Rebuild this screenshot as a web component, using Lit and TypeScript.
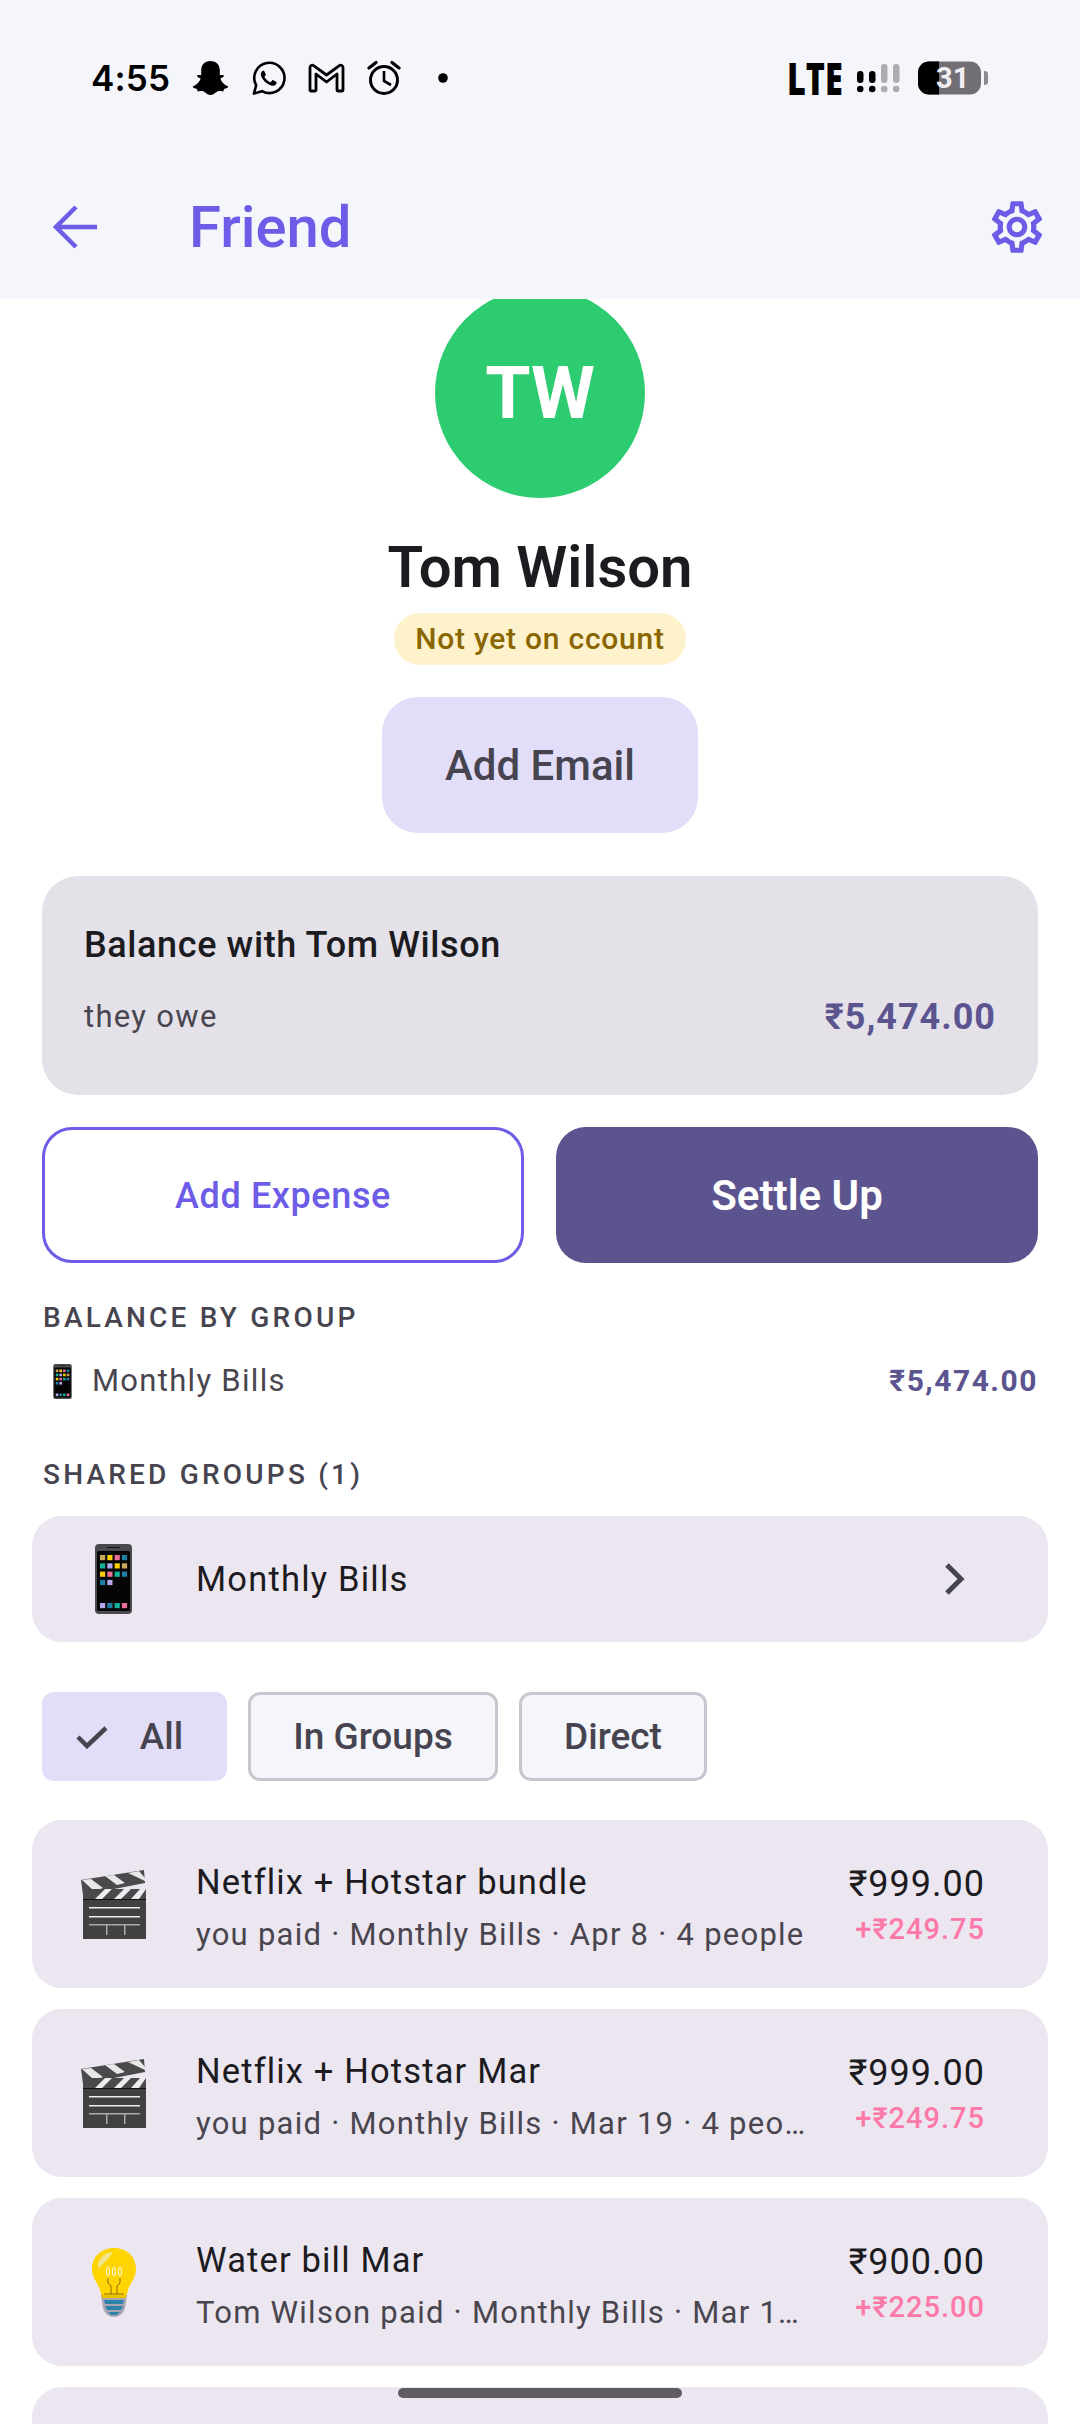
import { LitElement, html, css, svg } from "lit";
import { customElement } from "lit/decorators.js";

const phone = (w: number, h: number) => html`<svg width=${w} height=${h} viewBox="0 0 37 70">
  <rect x="0" y="0" width="37" height="70" rx="4" fill="#4a4a4e"/>
  <rect x="2" y="7" width="33" height="60" rx="1.5" fill="#050505"/>
  <rect x="12" y="3" width="13" height="1" fill="#111"/>
  ${[
    ["#c9a85a","#ffd000","#ee6f9c","#1c7fa3"],
    ["#10b39a","#b6a8ee","#ffd000","#c9a85a"],
    ["#ffd000","#ee6f9c","#10b39a","#1c7fa3"],
    ["#1c7fa3","#b6a8ee"],
  ].map((row, r) => row.map((c, i) => svg`<rect x=${5 + i * 7.3} y=${11 + r * 8.3} width="5.2" height="5.2" fill=${c}/>`))}
  ${["#b6a8ee","#1c7fa3","#10b39a","#ee6f9c"].map((c, i) => svg`<rect x=${5 + i * 7.3} y="59" width="5.2" height="5.2" fill=${c}/>`)}
</svg>`;

const clapper = html`<svg width="65" height="69" viewBox="0 0 65 69">
  <path d="M0 10 63 0 64 13 2 25Z" fill="#4a4a4c"/>
  <path d="M1 10 10 9 22 18 13 21ZM24 6 33 5 44 13 36 15ZM47 3 58 1 64 8 64 11Z" fill="#e9e7ea"/>
  <path d="M2 19H65V29H2Z" fill="#4a4a4c"/>
  <path d="M14 29 24 19H31L21 29ZM33 29 43 19H50L40 29ZM50 29 59 19H65L58 29Z" fill="#eeecef"/>
  <rect x="2" y="29" width="63" height="40" fill="#414143"/>
  <rect x="2" y="29" width="63" height="1" fill="#111"/>
  <rect x="8" y="37" width="51" height="1.5" fill="#eee"/>
  <rect x="8" y="46" width="51" height="1.5" fill="#eee"/>
  <rect x="8" y="54" width="51" height="1.5" fill="#aaa"/>
  <rect x="25" y="55" width="1.5" height="10" fill="#aaa"/>
  <rect x="43" y="55" width="1.5" height="10" fill="#aaa"/>
</svg>`;

const bulb = html`<svg width="44" height="69" viewBox="0 0 44 69">
  <path d="M22 0C9 0 0 9 0 21c0 10 7 14 9 25 0 2 1 3 2 3h22c1 0 2-1 2-3 2-11 9-15 9-25C44 9 35 0 22 0Z" fill="#ffd400"/>
  <path d="M6 20C5 12 11 5 20 4c1 2-5 8-9 12-2 2-3 4-5 4Z" fill="#f1e58c"/>
  <path d="M16 19c-2 0-2 9 0 9s2-9 0-9m6 0c-2 0-2 9 0 9s2-9 0-9m6 0c-2 0-2 9 0 9s2-9 0-9" fill="none" stroke="#fff" stroke-width="1"/>
  <path d="M16 30v5l3 3v8M28 30v5l-3 3v8M12 46H32" fill="none" stroke="#8a6a10" stroke-width="1"/>
  <path d="M9 47H35L33 60C31 66 27 69 22 69S13 66 11 60Z" fill="#a9a6b4"/>
  <path d="M12 52H32L31 56H13ZM13 58H31L29 62H15ZM16 64H28L25 67H19Z" fill="#2f83a8"/>
  <path d="M10 47H34V50H10Z" fill="#e8c400"/>
</svg>`;

type Row = { icon: unknown; title: string; sub: string; amount: string; share: string };
const rows: Row[] = [
  { icon: clapper, title: "Netflix + Hotstar bundle", sub: "you paid · Monthly Bills · Apr 8 · 4 people", amount: "₹999.00", share: "+₹249.75" },
  { icon: clapper, title: "Netflix + Hotstar Mar", sub: "you paid · Monthly Bills · Mar 19 · 4 people", amount: "₹999.00", share: "+₹249.75" },
  { icon: bulb, title: "Water bill Mar", sub: "Tom Wilson paid · Monthly Bills · Mar 19 · 4 people", amount: "₹900.00", share: "+₹225.00" },
];

@customElement("app-root")
export class AppRoot extends LitElement {
  static styles = css`
    :host { display: block; width: 1080px; height: 2424px; position: relative; overflow: hidden; background: #fff; font-family: Roboto, sans-serif; color: #1c1b1f; }
    .top { background: #f5f6fb; height: 299px; display: flex; flex-direction: column; position: relative; z-index: 1; }
    .status { height: 156px; display: flex; align-items: flex-start; box-sizing: border-box; padding: 60px 90px 0 91px; justify-content: space-between; }
    .side { display: flex; align-items: center; height: 36px; }
    .time { font: 600 35px/36px Inter, Roboto, sans-serif; color: #000; margin-right: 22px; letter-spacing: 0.2px; }
    .lte { font: 800 45px/34px "Open Sans", Roboto, sans-serif; color: #000; transform: scaleX(.72); transform-origin: left center; width: 70px; letter-spacing: 0; }
    .batt { position: relative; width: 72px; height: 34px; margin-left: 18px; }
    .batt-num { position: absolute; left: 18px; width: 28px; top: 0; font: 700 29px/34px Roboto, sans-serif; color: #f1eff3; text-align: center; }
    .snap, .wa { margin-right: 21px; }
    .gm { margin-right: 22px; }
    .al { margin-right: 37px; }
    .bar { height: 142px; display: flex; align-items: center; box-sizing: border-box; padding: 0 32px 0 53px; }
    .bar h1 { margin: 0 0 0 91px; font: 500 58px/1 Roboto, sans-serif; color: #6c5ce7; flex: 1; }
    .scroll { height: 2125px; overflow: hidden; }
    .center { display: flex; flex-direction: column; align-items: center; margin-top: -11px; }
    .avatar { width: 210px; height: 210px; border-radius: 50%; background: #2ecc71; color: #fff; display: flex; align-items: center; justify-content: center; font: 700 73px/1 Roboto, sans-serif; }
    .name { font: 600 58px/66px Roboto, sans-serif; margin-top: 36px; color: #1c1b1f; }
    .badge { background: #fdf2cc; color: #8a6500; font: 500 30px/52px Roboto, sans-serif; letter-spacing: .75px; padding: 0 21px; border-radius: 26px; margin-top: 13px; }
    .email { width: 316px; height: 136px; margin-top: 32px; border-radius: 36px; background: #e2defa; color: #46444f; font: 500 42px/138px Roboto, sans-serif; text-align: center; }
    .balance { margin: 43px 42px 0; height: 219px; box-sizing: border-box; padding: 48px 42px 0; background: #e4e1e9; border-radius: 36px; }
    .balance .t { font: 500 36px/42px Roboto, sans-serif; color: #1c1b1f; letter-spacing: .6px; }
    .balance .r { display: flex; justify-content: space-between; align-items: center; margin-top: 31px; }
    .balance .l { font: 400 31px/40px Roboto, sans-serif; color: #49454f; letter-spacing: 1.3px; }
    .balance .v { font: 700 36px/40px Roboto, sans-serif; color: #5b548f; letter-spacing: 1px; }
    .actions { display: grid; grid-template-columns: 1fr 1fr; gap: 32px; margin: 32px 42px 0; }
    .actions div { height: 136px; box-sizing: border-box; border-radius: 30px; display: flex; align-items: center; justify-content: center; padding-top: 2px; }
    .a1 { border: 3px solid #6c5ce7; color: #6c5ce7; font: 500 36px/1 Roboto, sans-serif; letter-spacing: .6px; }
    .a2 { background: #5b548f; color: #fff; font: 600 42px/1 Roboto, sans-serif; }
    .sec { font: 500 28px/36px Roboto, sans-serif; letter-spacing: 3.2px; color: #46444f; margin: 0 43px; }
    .s1 { margin-top: 37px; }
    .s2 { margin-top: 56px; }
    .grow { display: flex; align-items: center; margin: 25px 42px 0 53px; height: 40px; }
    .grow .n { font: 400 31px/40px Roboto, sans-serif; color: #49454f; letter-spacing: 1.3px; margin-left: 20px; flex: 1; }
    .grow .v { font: 700 30px/40px Roboto, sans-serif; color: #5b548f; letter-spacing: 1.5px; }
    .gcard { margin: 23px 32px 0; height: 126px; border-radius: 30px; background: #ebe6f0; display: flex; align-items: center; box-sizing: border-box; padding: 0 81px 0 63px; }
    .gcard .n { font: 400 34.5px/40px Roboto, sans-serif; letter-spacing: 1.2px; margin-left: 64px; flex: 1; }
    .chips { display: flex; gap: 21px; margin: 50px 42px 0; }
    .chip { height: 89px; box-sizing: border-box; border-radius: 12px; display: flex; align-items: center; justify-content: center; font: 500 37px/1 Roboto, sans-serif; color: #46444f; background: #f5f6fb; border: 3px solid #c9c6d0; }
    .chip.on { background: #e2defa; border: 0; width: 185px; gap: 32px; padding-right: 10px; }
    .c2 { width: 250px; }
    .c3 { width: 188px; }
    .list { display: flex; flex-direction: column; gap: 21px; margin: 39px 32px 0; }
    .row { height: 168px; border-radius: 30px; background: #ebe6f0; display: flex; align-items: center; box-sizing: border-box; padding: 0 63px 0 49px; flex: none; }
    .ic { width: 65px; display: flex; justify-content: center; flex: none; }
    .main { flex: 1; min-width: 0; margin-left: 50px; padding-top: 9px; }
    .title { font: 400 34.5px/40px Roboto, sans-serif; letter-spacing: 1.15px; color: #1c1b1f; white-space: nowrap; overflow: hidden; text-overflow: ellipsis; }
    .sub { font: 400 31px/40px Roboto, sans-serif; letter-spacing: 1.25px; color: #49454f; margin-top: 13px; white-space: nowrap; overflow: hidden; text-overflow: ellipsis; }
    .amt { margin-left: 41px; text-align: right; flex: none; padding-top: 5px; }
    .amount { font: 400 36px/40px Roboto, sans-serif; letter-spacing: 1px; color: #1c1b1f; }
    .share { font: 500 29px/40px Roboto, sans-serif; letter-spacing: 1px; color: #fd79a8; margin-top: 5px; }
    .home { position: absolute; left: 398px; top: 2388px; width: 284px; height: 10px; border-radius: 5px; background: #5f5c64; }
  `;

  render() {
    return html`
      <div class="top">
        <div class="status">
          <div class="side">
            <span class="time">4:55</span>
            <svg class="snap" width="37" height="36" viewBox="0 0 37 36"><path d="M18.5 1c6 0 9.300 4 9.300 9.500v4.500c1.500.5 3.500-.5 4 .8.400 1.400-2.600 2.200-3.400 2.800 1 3.500 4.200 6.700 7.500 7.700.8.500.3 1.800-3.800 2.600-.6.800-.3 2.400-1.300 2.500-2-.3-4.300-.8-6.600.8-2 1.500-3.500 2.800-5.700 2.800s-3.700-1.300-5.700-2.800c-2.300-1.600-4.600-1.100-6.600-.8-1 0-.7-1.700-1.300-2.500-4.100-.8-4.600-2.100-3.800-2.600 3.300-1 6.500-4.200 7.500-7.700-.8-.6-3.800-1.400-3.400-2.800.5-1.300 2.500-.3 4-.8v-4.500C9.200 5 12.500 1 18.500 1Z" fill="#000"/></svg>
            <svg class="wa" width="37" height="37" viewBox="0 0 24 24"><path d="M2.500 21.800 4 16.400A9.800 9.800 0 1 1 7.800 20.200Z" fill="none" stroke="#000" stroke-width="1.700" stroke-linejoin="round"/><path d="M8.800 6.900c-.4 0-1 .2-1.300.8-.9 1.400-.5 3 .7 4.700 1.500 2.200 3.700 3.900 6 4.300 1.300.2 2.500-.5 2.900-1.500.2-.5.200-.9.100-1l-2.300-1.200c-.2 0-.4 0-.5.200l-.8 1c-.2.200-.4.200-.6.100-1.500-.6-2.700-1.700-3.500-3.100-.1-.2-.1-.4.100-.6l.6-.8c.1-.2.100-.4 0-.6l-1-2.100c-.1-.2-.2-.2-.4-.2Z" fill="#000"/></svg>
            <svg class="gm" width="37" height="30" viewBox="0 0 37 30"><path d="M2 27V4.500C2 2.500 4 1.500 6 2.800L18.500 12 31 2.800c2-1.300 4-.3 4 1.700V27c0 .6-.4 1-1 1h-4c-.6 0-1-.4-1-1V11L18.500 19 8 11V27c0 .6-.4 1-1 1H3c-.6 0-1-.4-1-1Z" fill="none" stroke="#000" stroke-width="2.800" stroke-linejoin="round"/></svg>
            <svg class="al" width="34" height="36" viewBox="0 0 34 36"><circle cx="17" cy="20" r="13.500" fill="none" stroke="#000" stroke-width="3"/><path d="M17 11v10l7 4" fill="none" stroke="#000" stroke-width="2.600"/><path d="M2 8 9 2.500M32 8 25 2.500" stroke="#000" stroke-width="3.200" stroke-linecap="round"/></svg>
            <svg width="10" height="10" viewBox="0 0 10 10"><circle cx="5" cy="5" r="4.800" fill="#000"/></svg>
          </div>
          <div class="side">
            <span class="lte">LTE</span>
            <svg width="43" height="32" viewBox="0 0 43 32"><g fill="#000"><rect x="0" y="9" width="6.500" height="12" rx="3.200"/><rect x="12" y="9" width="6.500" height="12" rx="3.200"/><circle cx="3.200" cy="27" r="3.300"/><circle cx="15.200" cy="27" r="3.300"/></g><g fill="#aeabb3"><rect x="24" y="2" width="6.500" height="19" rx="3.200"/><rect x="36" y="2" width="6.500" height="19" rx="3.200"/><circle cx="27.200" cy="27" r="3.300"/><circle cx="39.200" cy="27" r="3.300"/></g></svg>
            <div class="batt">
              <svg width="72" height="34" viewBox="0 0 72 34"><rect x="0" y="0.500" width="63" height="33" rx="11" fill="#716e75"/><path d="M11 .5H21V33.500H11A11 11 0 0 1 0 22.500V11.500A11 11 0 0 1 11 .5Z" fill="#000"/><path d="M66 10c3 0 4 1 4 3v8c0 2-1 3-4 3Z" fill="#8b888f"/></svg>
              <span class="batt-num">31</span>
            </div>
          </div>
        </div>
        <div class="bar">
          <svg width="45" height="44" viewBox="0 0 45 44"><path d="M44 22H5M23 2 3 22 23 42" fill="none" stroke="#6c5ce7" stroke-width="4.500"/></svg>
          <h1>Friend</h1>
          <svg width="62" height="62" viewBox="0 0 24 24"><path fill="#6c5ce7" d="M19.430 12.980c.04-.32.07-.64.07-.98 0-.34-.03-.66-.07-.98l2.110-1.650c.19-.15.24-.42.12-.64l-2-3.460c-.09-.16-.26-.25-.44-.25-.06 0-.12.01-.17.03l-2.490 1c-.52-.4-1.080-.73-1.690-.98l-.38-2.650C14.460 2.180 14.250 2 14 2h-4c-.25 0-.46.18-.49.42l-.38 2.650c-.61.25-1.170.59-1.690.98l-2.490-1c-.06-.02-.12-.03-.18-.03-.17 0-.34.09-.43.25l-2 3.460c-.13.22-.07.49.12.64l2.110 1.650c-.04.32-.07.65-.07.98 0 .33.03.66.07.98l-2.110 1.650c-.19.15-.24.42-.12.64l2 3.460c.09.16.26.25.44.25.06 0 .12-.01.17-.03l2.490-1c.52.4 1.080.73 1.690.98l.38 2.650c.03.24.24.42.49.42h4c.25 0 .46-.18.49-.42l.38-2.650c.61-.25 1.170-.59 1.690-.98l2.490 1c.06.02.12.03.18.03.17 0 .34-.09.43-.25l2-3.460c.12-.22.07-.49-.12-.64l-2.110-1.650zm-1.980-1.710c.04.31.05.52.05.73 0 .21-.02.43-.05.73l-.14 1.130.89.7 1.080.84-.7 1.210-1.270-.51-1.040-.42-.9.68c-.43.32-.84.56-1.250.73l-1.060.43-.16 1.130-.2 1.350h-1.400l-.19-1.350-.16-1.130-1.060-.43c-.43-.18-.83-.41-1.230-.71l-.91-.7-1.060.43-1.270.51-.7-1.210 1.080-.84.89-.7-.14-1.130c-.03-.31-.05-.54-.05-.74s.02-.43.05-.73l.14-1.130-.89-.7-1.080-.84.7-1.210 1.270.51 1.040.42.9-.68c.43-.32.84-.56 1.250-.73l1.060-.43.16-1.130.2-1.350h1.390l.19 1.350.16 1.130 1.060.43c.43.18.83.41 1.230.71l.91.7 1.060-.43 1.270-.51.7 1.210-1.070.85-.89.7.14 1.130zM12 8c-2.210 0-4 1.790-4 4s1.790 4 4 4 4-1.790 4-4-1.790-4-4-4zm0 6c-1.100 0-2-.9-2-2s.9-2 2-2 2 .9 2 2-.9 2-2 2z"/></svg>
        </div>
      </div>
      <div class="scroll">
        <div class="center">
          <div class="avatar">TW</div>
          <div class="name">Tom Wilson</div>
          <div class="badge">Not yet on ccount</div>
          <div class="email">Add Email</div>
        </div>
        <div class="balance">
          <div class="t">Balance with Tom Wilson</div>
          <div class="r"><span class="l">they owe</span><span class="v">₹5,474.00</span></div>
        </div>
        <div class="actions"><div class="a1">Add Expense</div><div class="a2">Settle Up</div></div>
        <div class="sec s1">BALANCE BY GROUP</div>
        <div class="grow">${phone(19, 35)}<span class="n">Monthly Bills</span><span class="v">₹5,474.00</span></div>
        <div class="sec s2">SHARED GROUPS (1)</div>
        <div class="gcard">
          ${phone(37, 70)}
          <span class="n">Monthly Bills</span>
          <svg width="24" height="34" viewBox="0 0 24 34"><path d="M4 3 18 17 4 31" fill="none" stroke="#46444f" stroke-width="5"/></svg>
        </div>
        <div class="chips">
          <div class="chip on"><svg width="32" height="24" viewBox="0 0 32 24"><path d="M2 12 11 21 30 3" fill="none" stroke="#46444f" stroke-width="4.500"/></svg><span>All</span></div>
          <div class="chip c2">In Groups</div>
          <div class="chip c3">Direct</div>
        </div>
        <div class="list">
          ${rows.map(r => html`<div class="row">
            <div class="ic">${r.icon}</div>
            <div class="main"><div class="title">${r.title}</div><div class="sub">${r.sub}</div></div>
            <div class="amt"><div class="amount">${r.amount}</div><div class="share">${r.share}</div></div>
          </div>`)}
          <div class="row"></div>
        </div>
      </div>
      <div class="home"></div>
    `;
  }
}
